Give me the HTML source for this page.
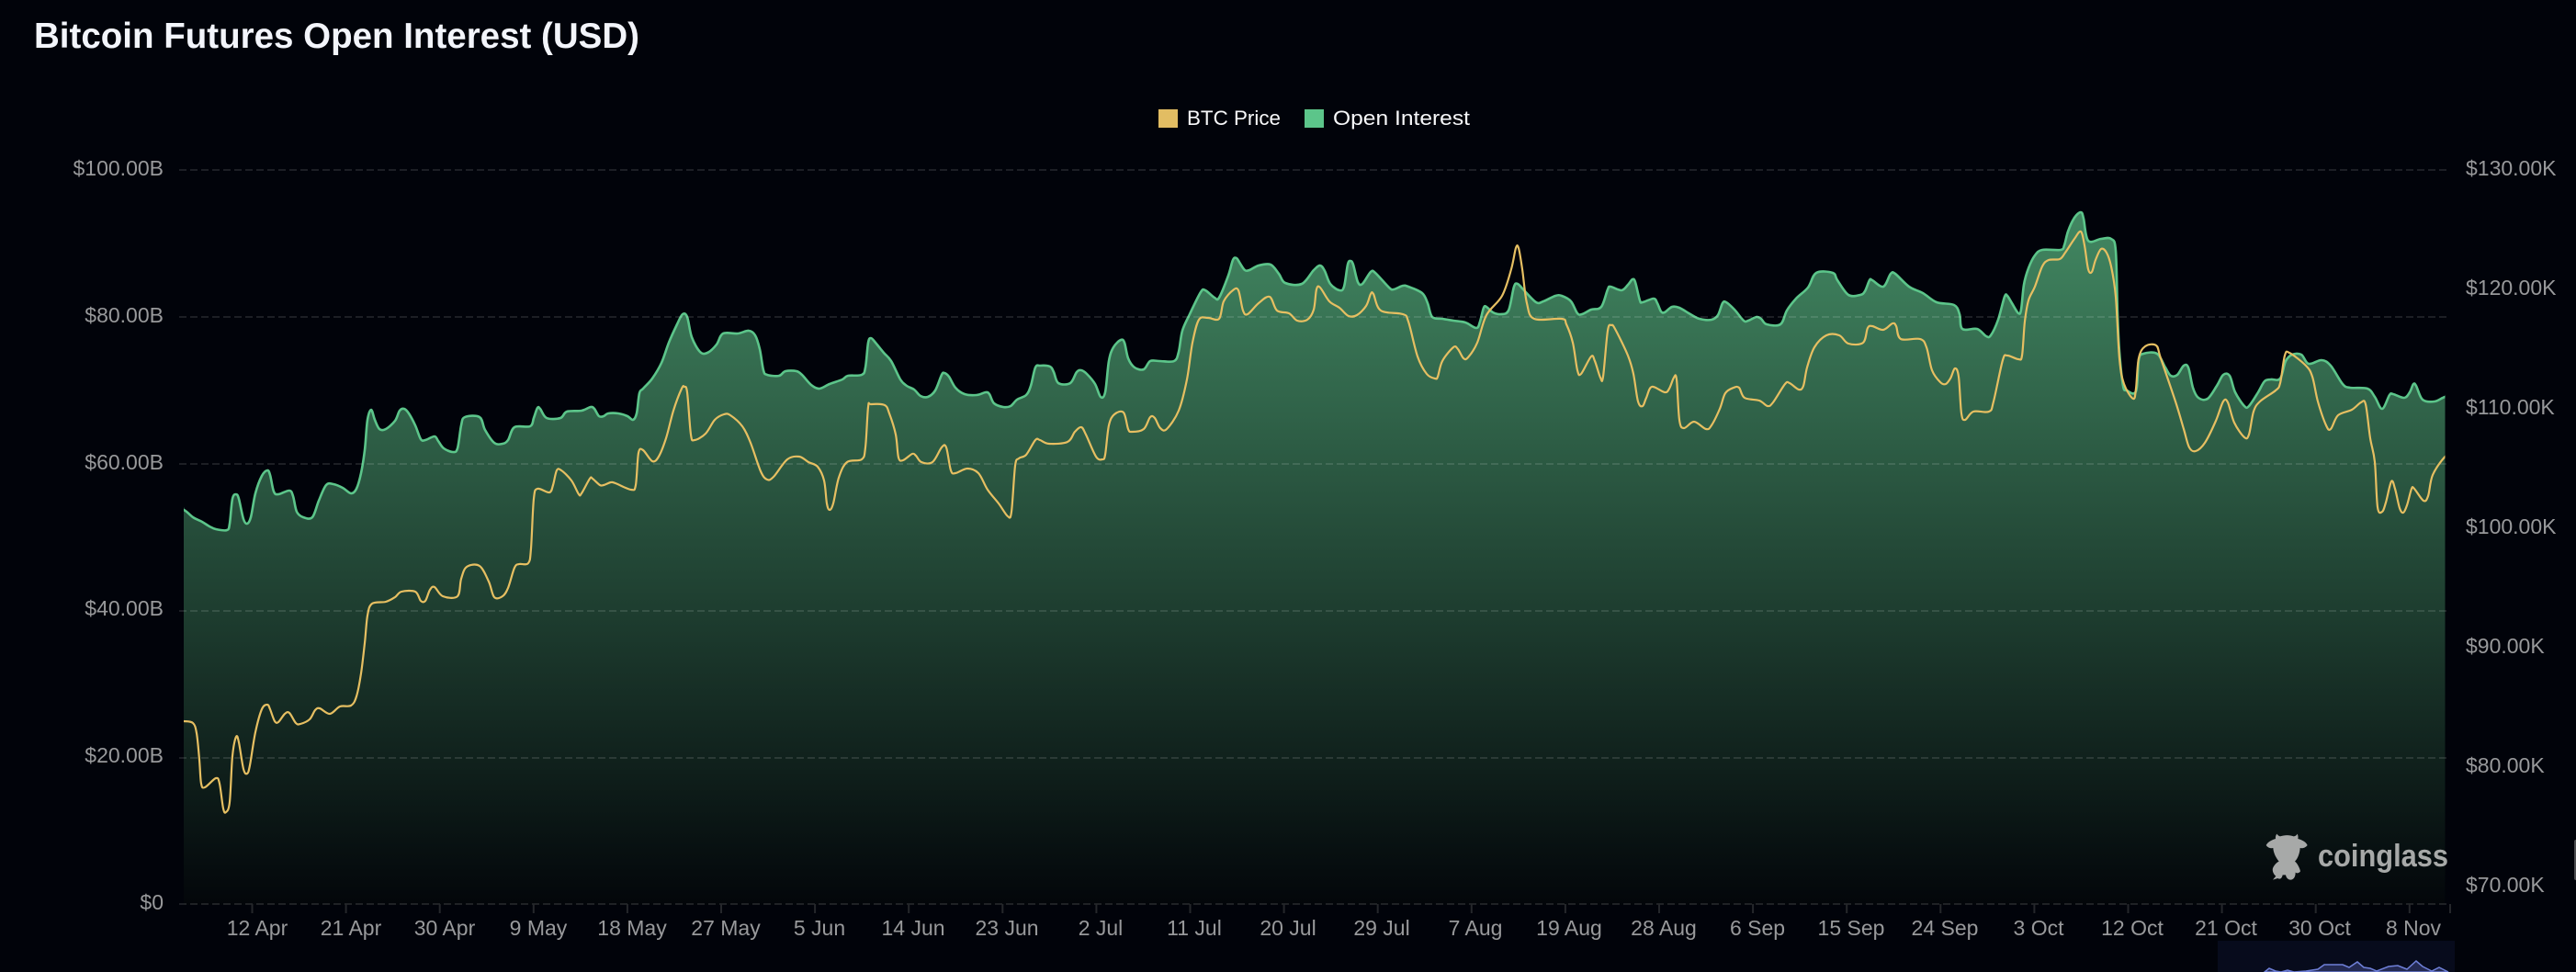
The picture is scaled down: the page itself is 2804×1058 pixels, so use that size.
<!DOCTYPE html>
<html><head><meta charset="utf-8"><title>Bitcoin Futures Open Interest (USD)</title>
<style>
html,body{margin:0;padding:0;background:#01030a;width:2804px;height:1058px;overflow:hidden}
svg{display:block;position:absolute;left:0;top:0}
text{font-family:"Liberation Sans",sans-serif}
.ax{font-size:23px;fill:#98999b}
.grid{stroke:rgba(255,255,255,.115);stroke-width:2;stroke-dasharray:8 4;fill:none}
.tick{stroke:#25272b;stroke-width:2}
</style></head><body>
<svg width="2804" height="1058" viewBox="0 0 2804 1058" xmlns="http://www.w3.org/2000/svg">
<defs>
<linearGradient id="ga" gradientUnits="userSpaceOnUse" x1="0" y1="232" x2="0" y2="985">
<stop offset="0" stop-color="#428862"/><stop offset="1" stop-color="#03060a"/>
</linearGradient>
<clipPath id="cp"><rect x="200" y="0" width="2461.5" height="985"/></clipPath>
</defs>
<rect width="2804" height="1058" fill="#01030a"/>
<text x="37" y="52" font-size="39" font-weight="700" fill="#f3f5fb" textLength="659" lengthAdjust="spacingAndGlyphs">Bitcoin Futures Open Interest (USD)</text>

<rect x="1261" y="119" width="21" height="20" fill="#e2bd63"/>
<text x="1292" y="136" font-size="22.5" fill="#f7f8fa" textLength="102" lengthAdjust="spacingAndGlyphs">BTC Price</text>
<rect x="1420" y="119" width="21" height="20" fill="#5cc58a"/>
<text x="1451" y="136" font-size="22.5" fill="#f7f8fa" textLength="149" lengthAdjust="spacingAndGlyphs">Open Interest</text>

<g clip-path="url(#cp)">
<polyline class="s" fill="url(#ga)" stroke="#5cc58a" stroke-width="2.6" stroke-linejoin="round" points="190,1100 190,555 200,555 210,563 220,568 228,573 235,576 247,577 250,570 253,543 257,538 260,543 265,565 269,570 273,563 278,537 285,518 291,512 294,517 298,535 303,538 315,534 319,540 323,557 330,563 340,563 347,545 355,528 363,527 373,531 382,537 388,532 393,515 397,490 400,457 404,446 408,457 413,467 420,467 430,458 435,447 440,445 445,450 452,463 458,478 463,479 473,475 477,480 483,488 493,492 498,488 502,463 506,454 522,454 528,468 538,482 547,483 553,479 560,465 577,464 581,455 585,444 588,445 595,455 610,455 617,448 633,447 643,443 647,445 652,453 657,453 662,450 673,450 683,453 689,457 693,450 696,428 700,423 710,412 720,395 728,373 737,353 743,342 748,345 753,367 762,383 770,384 780,375 787,363 803,363 815,360 822,365 827,380 831,403 835,408 848,409 855,404 867,404 873,408 883,419 892,423 903,418 917,413 923,409 938,408 942,400 945,373 948,368 953,373 962,384 970,393 980,413 987,420 995,424 1002,431 1010,432 1018,425 1025,408 1028,406 1033,410 1040,422 1050,429 1063,430 1073,427 1077,429 1082,439 1092,443 1100,442 1107,435 1117,430 1122,420 1127,400 1132,398 1143,399 1147,405 1152,417 1165,417 1172,405 1177,403 1183,407 1192,418 1198,432 1203,427 1207,393 1212,378 1220,370 1224,373 1228,390 1235,400 1245,402 1252,393 1262,393 1278,393 1283,383 1287,360 1295,342 1307,318 1312,316 1322,324 1327,324 1337,300 1342,283 1346,281 1350,287 1355,294 1360,294 1370,289 1383,288 1392,298 1399,308 1417,309 1430,294 1437,289 1442,295 1448,309 1458,316 1463,312 1467,288 1470,284 1473,288 1478,307 1483,309 1492,296 1497,297 1512,313 1517,315 1527,311 1533,312 1548,319 1554,330 1559,345 1570,347 1582,349 1595,351 1607,357 1611,350 1615,335 1618,334 1625,340 1633,342 1642,338 1648,312 1652,309 1658,315 1672,329 1680,328 1693,322 1700,322 1710,328 1717,341 1722,342 1732,337 1743,334 1750,315 1753,312 1765,316 1772,310 1777,304 1780,307 1785,327 1788,329 1800,325 1804,330 1808,339 1812,340 1820,334 1828,335 1840,342 1850,347 1863,348 1870,343 1875,330 1879,329 1888,337 1898,349 1903,349 1912,345 1917,347 1923,353 1938,353 1945,338 1955,325 1968,313 1977,297 1995,297 2000,305 2012,321 2025,321 2030,317 2035,305 2038,305 2050,312 2058,298 2063,298 2078,312 2093,319 2108,329 2127,332 2133,342 2136,358 2152,358 2162,366 2167,365 2175,348 2182,323 2185,322 2190,330 2197,341 2200,337 2203,310 2208,292 2215,278 2223,272 2243,272 2247,267 2251,252 2258,237 2265,231 2268,238 2273,262 2287,260 2298,260 2303,273 2305,343 2307,383 2311,420 2315,425 2325,426 2328,392 2333,385 2348,385 2357,400 2363,409 2370,408 2377,398 2382,400 2387,422 2393,433 2403,434 2413,420 2420,408 2427,409 2433,427 2443,442 2448,442 2458,427 2465,415 2472,413 2482,412 2488,393 2495,386 2505,386 2513,396 2527,392 2537,398 2550,418 2558,422 2577,423 2585,432 2593,445 2601,430 2605,429 2617,433 2623,427 2627,418 2630,420 2637,435 2650,437 2661.5,432 2672,432 2672,1100"/>
</g>

<g class="grid">
<path d="M195 185H2667M195 345H2667M195 505H2667M195 665H2667M195 825H2667M195 984H2667"/>
</g>
<g class="tick"><path d="M274.5 984v10M376.6 984v10M478.7 984v10M580.8 984v10M682.9 984v10M785 984v10M887.1 984v10M989.2 984v10M1091.3 984v10M1193.4 984v10M1295.5 984v10M1397.6 984v10M1499.7 984v10M1601.8 984v10M1703.9 984v10M1806 984v10M1908.1 984v10M2010.2 984v10M2112.3 984v10M2214.4 984v10M2316.5 984v10M2418.6 984v10M2520.7 984v10M2622.8 984v10M2667 984v10" stroke="#25272b" stroke-width="2"/></g>

<g clip-path="url(#cp)">
<polyline class="s" fill="none" stroke="#e6bf62" stroke-width="2.2" stroke-linejoin="round" points="190,785 200,785 210,787 214,798 217,827 219,853 223,857 235,847 239,853 243,880 246,884 250,873 253,823 257,802 260,808 265,837 269,842 272,833 278,797 285,772 291,767 294,772 299,785 303,786 310,777 315,776 322,787 327,788 337,783 343,773 348,771 359,777 370,769 382,768 388,758 393,733 397,700 400,670 405,657 420,655 430,650 437,644 452,644 458,654 463,654 468,642 473,639 482,649 498,649 502,630 508,617 522,616 532,633 538,650 547,649 553,640 560,618 565,614 575,613 578,597 581,543 585,532 598,536 602,528 606,512 611,512 622,523 630,538 633,537 642,521 645,521 653,528 657,528 665,525 670,526 687,533 692,528 695,493 700,490 710,502 717,497 725,477 733,447 742,423 745,421 748,427 752,473 756,479 768,472 778,457 788,451 795,452 808,464 817,482 828,513 835,522 842,519 857,500 870,497 880,503 890,508 897,523 900,548 903,555 907,548 913,520 922,503 938,500 942,487 945,443 948,440 963,441 968,450 975,473 978,498 983,501 993,494 997,496 1003,503 1015,503 1025,487 1030,487 1035,512 1040,515 1053,510 1065,515 1075,533 1087,548 1097,562 1101,557 1105,507 1109,499 1117,495 1127,479 1132,479 1142,483 1162,481 1170,470 1177,465 1182,473 1193,497 1200,500 1203,495 1207,463 1213,451 1223,449 1228,467 1232,470 1245,467 1252,454 1257,455 1263,466 1270,467 1283,447 1292,413 1298,373 1305,348 1315,346 1327,347 1332,328 1342,316 1348,316 1353,338 1358,342 1370,330 1382,323 1390,338 1403,341 1412,349 1423,348 1430,337 1433,315 1437,313 1447,328 1458,335 1468,344 1477,343 1487,333 1492,320 1495,320 1503,338 1527,342 1533,350 1543,388 1553,407 1562,412 1565,410 1570,393 1582,378 1587,380 1593,390 1598,389 1608,373 1618,343 1635,322 1645,293 1650,270 1653,270 1657,293 1662,330 1670,347 1700,347 1705,353 1712,373 1717,403 1721,407 1732,388 1736,393 1742,411 1745,410 1750,360 1754,354 1758,358 1772,387 1778,407 1783,437 1788,442 1792,433 1798,421 1812,427 1817,423 1822,411 1825,413 1828,457 1833,466 1844,459 1857,467 1863,463 1872,445 1878,428 1887,422 1893,422 1899,433 1915,436 1924,442 1930,438 1943,418 1948,417 1958,424 1963,420 1967,400 1975,378 1988,365 2002,365 2012,374 2028,373 2033,357 2038,355 2050,359 2060,352 2064,355 2069,369 2090,369 2097,378 2103,403 2112,416 2118,418 2123,412 2128,401 2132,410 2135,450 2139,457 2148,448 2165,448 2170,437 2180,392 2185,387 2197,391 2201,387 2204,350 2208,327 2215,312 2223,290 2230,283 2242,282 2248,275 2258,260 2265,252 2269,267 2273,293 2277,296 2281,283 2287,271 2293,275 2298,290 2303,323 2307,390 2312,418 2322,434 2325,423 2328,390 2335,377 2347,376 2352,390 2368,437 2377,467 2383,487 2390,491 2400,482 2412,458 2420,437 2425,438 2432,460 2443,476 2448,473 2453,448 2460,437 2477,425 2482,417 2487,387 2492,384 2510,398 2517,410 2523,437 2532,463 2537,467 2545,452 2560,446 2570,438 2575,440 2580,477 2585,503 2588,552 2593,557 2597,547 2603,524 2607,532 2612,553 2616,558 2620,550 2625,532 2628,532 2638,545 2643,540 2648,517 2661.5,497 2672,492"/>
</g>

<g class="ax" text-anchor="end">
<text x="178" y="191">$100.00B</text>
<text x="178" y="351">$80.00B</text>
<text x="178" y="511">$60.00B</text>
<text x="178" y="670">$40.00B</text>
<text x="178" y="830">$20.00B</text>
<text x="178" y="990">$0</text>
</g>
<g class="ax">
<text x="2684" y="191">$130.00K</text>
<text x="2684" y="321">$120.00K</text>
<text x="2684" y="451">$110.00K</text>
<text x="2684" y="581">$100.00K</text>
<text x="2684" y="711">$90.00K</text>
<text x="2684" y="841">$80.00K</text>
<text x="2684" y="971">$70.00K</text>
</g>
<g class="ax" text-anchor="middle">
<text x="280" y="1018">12 Apr</text>
<text x="382" y="1018">21 Apr</text>
<text x="484" y="1018">30 Apr</text>
<text x="586" y="1018">9 May</text>
<text x="688" y="1018">18 May</text>
<text x="790" y="1018">27 May</text>
<text x="892" y="1018">5 Jun</text>
<text x="994" y="1018">14 Jun</text>
<text x="1096" y="1018">23 Jun</text>
<text x="1198" y="1018">2 Jul</text>
<text x="1300" y="1018">11 Jul</text>
<text x="1402" y="1018">20 Jul</text>
<text x="1504" y="1018">29 Jul</text>
<text x="1606" y="1018">7 Aug</text>
<text x="1708" y="1018">19 Aug</text>
<text x="1811" y="1018">28 Aug</text>
<text x="1913" y="1018">6 Sep</text>
<text x="2015" y="1018">15 Sep</text>
<text x="2117" y="1018">24 Sep</text>
<text x="2219" y="1018">3 Oct</text>
<text x="2321" y="1018">12 Oct</text>
<text x="2423" y="1018">21 Oct</text>
<text x="2525" y="1018">30 Oct</text>
<text x="2627" y="1018">8 Nov</text>
</g>

<g transform="translate(2450 895) scale(.3333)" fill="#a7a9a8">
<path d="M85 38C88 42 92 46 96 46C110 41 128 41 140 46C146 46 150 42 152 38C155 44 155 50 154 54C168 58 180 64 185 75C178 84 168 86 161 84C160 100 154 118 144 128C152 134 160 150 162 160C158 166 150 168 146 164C146 176 142 186 132 188C122 188 116 182 114 172L104 172C102 182 96 188 88 183L72 188L82 176C72 168 70 156 72 150C78 138 84 132 92 128C82 116 74 100 73 84C66 86 56 84 50 75C56 64 68 58 81 54C80 48 82 42 85 38Z"/>
</g>
<text x="2523" y="943" font-size="34" font-weight="700" fill="#a7a9a8" textLength="142" lengthAdjust="spacingAndGlyphs">coinglass</text>

<rect x="2414" y="1024" width="258" height="34" fill="#070b1c"/>
<path d="M2465 1058L2470 1054L2477 1057L2483 1058L2490 1056L2497 1058L2510 1057L2523 1055L2530 1050L2550 1050L2557 1053L2566 1047L2573 1053L2580 1054L2587 1057L2600 1052L2610 1051L2620 1055L2630 1046L2637 1052L2647 1057L2655 1053L2665 1058Z" fill="#242a52" stroke="#6f80d8" stroke-width="1.5"/>
<rect x="2802" y="914" width="4" height="44" rx="2" fill="#4c4d50"/>
</svg>
<script>
document.querySelectorAll('polyline.s').forEach(function(p){
 var n=p.getAttribute('points').trim().split(/\s+/).map(function(s){return s.split(',').map(Number)});
 var d='M'+n[0][0]+' '+n[0][1];
 for(var i=0;i<n.length-1;i++){
  var a=n[Math.max(i-1,0)],b=n[i],c=n[i+1],e=n[Math.min(i+2,n.length-1)];
  d+='C'+(b[0]+(c[0]-a[0])/6).toFixed(1)+' '+(b[1]+(c[1]-a[1])/6).toFixed(1)+' '+(c[0]-(e[0]-b[0])/6).toFixed(1)+' '+(c[1]-(e[1]-b[1])/6).toFixed(1)+' '+c[0]+' '+c[1];
 }
 var q=document.createElementNS('http://www.w3.org/2000/svg','path');
 ['fill','stroke','stroke-width','stroke-linejoin'].forEach(function(k){q.setAttribute(k,p.getAttribute(k))});
 q.setAttribute('d',d);
 p.parentNode.replaceChild(q,p);
});
</script>
</body></html>
